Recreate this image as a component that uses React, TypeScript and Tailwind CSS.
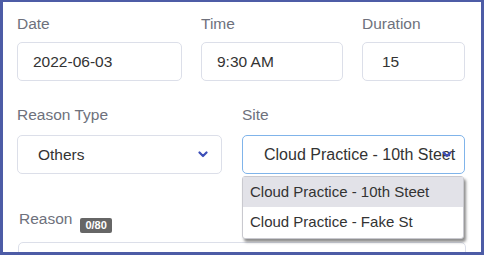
function Chevron() {
  return (
    <svg width="10" height="7" viewBox="0 0 10 7" className="shrink-0">
      <polyline points="1.5,1.5 5,5 8.5,1.5" fill="none" stroke="#3d4fb8" strokeWidth="2.2" strokeLinecap="round" strokeLinejoin="round" />
    </svg>
  );
}

function Label({ children }: { children: React.ReactNode }) {
  return <div className="text-[15.5px] leading-[18px] text-[#6e717c]">{children}</div>;
}

function TextField({ label, value, width, pad }: { label: string; value: string; width: string; pad: string }) {
  return (
    <div className={`flex flex-col gap-[9px] ${width}`}>
      <Label>{label}</Label>
      <div className={`h-[39px] border border-[#dcdfe9] rounded-[5px] flex items-center text-[15.5px] text-[#333] ${pad}`}>
        {value}
      </div>
    </div>
  );
}

export default function App() {
  return (
    <div className="font-['Liberation_Sans',Arial,sans-serif] w-[484px] h-[255px] overflow-hidden bg-white border-[3px] border-t-2 border-[#4d5ca6]">
      <div className="pl-[14px] pr-[16px] pt-[13px] flex flex-col">
        {/* first row */}
        <div className="flex gap-[19px]">
          <TextField label="Date" value="2022-06-03" width="w-[165px]" pad="pl-[15px]" />
          <TextField label="Time" value="9:30 AM" width="w-[142px]" pad="pl-[15px]" />
          <TextField label="Duration" value="15" width="w-[103px]" pad="pl-[19px]" />
        </div>

        {/* second row */}
        <div className="flex gap-[20px] mt-[25px]">
          <div className="flex flex-col gap-[11px] w-[205px]">
            <Label>Reason Type</Label>
            <div className="relative h-[39px] border border-[#dcdfe9] rounded-[5px] flex items-center pl-[20px] text-[15.5px] text-[#333]">
              Others
              <div className="absolute right-[13px] top-[15px]">
                <Chevron />
              </div>
            </div>
          </div>
          <div className="relative flex flex-col gap-[11px] w-[223px]">
            <Label>Site</Label>
            <div className="relative h-[39px] border border-[#80b4ea] rounded-[5px] flex items-center pl-[21px] text-[16px] text-[#333] overflow-hidden">
              <span className="whitespace-nowrap">Cloud Practice - 10th Steet</span>
              <div className="absolute right-[12px] top-[15px]">
                <Chevron />
              </div>
            </div>
            <div className="absolute left-0 top-full mt-[2px] w-[222px] bg-white border border-[#c9c9cf] rounded-[3px] shadow-[2px_3px_3px_rgba(0,0,0,0.45)] text-[15px] text-[#333] z-10">
              <div className="h-[30px] flex items-center pl-[7px] bg-[#e2e2e8]">Cloud Practice - 10th Steet</div>
              <div className="h-[31px] flex items-center pl-[7px]">Cloud Practice - Fake St</div>
            </div>
          </div>
        </div>

        {/* third row */}
        <div className="flex flex-col gap-[9px] mt-[36px]">
          <div className="flex items-start gap-[8px] pl-[2px]">
            <Label>Reason</Label>
            <span className="mt-[8px] h-[15px] px-[5px] rounded-[2px] bg-[#666] text-white text-[11px] font-bold leading-[15px]">0/80</span>
          </div>
          <div className="h-[40px] border border-[#dcdfe9] rounded-[5px] ml-[1px] w-[448px]"></div>
        </div>
      </div>
    </div>
  );
}
